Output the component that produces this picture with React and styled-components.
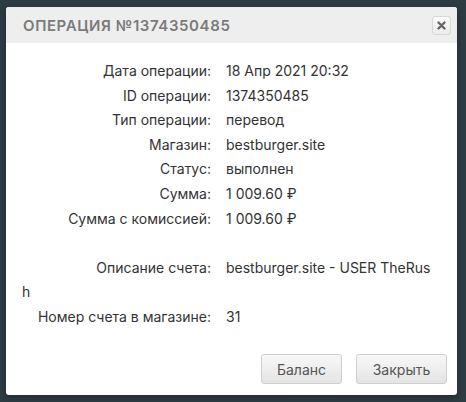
import React from 'react'
import styled, { createGlobalStyle } from 'styled-components'

const GlobalStyle = createGlobalStyle`
    html, body {
        margin: 0;
        padding: 0;
        background-color: #2d3b43;
    }
    body {
        font-family: Inter, "Noto Sans", sans-serif;
    }
`

const Overlay = styled.div`
    width: 466px;
    height: 402px;
    box-sizing: border-box;
    padding: 7px 9px 7px 6px;
`

const Dialog = styled.div`
    background-color: #fff;
    border-radius: 3px;
    overflow: hidden;
    box-shadow: 0 2px 6px rgba(0,0,0,.3);
    height: 388px;
    display: flex;
    flex-direction: column;
`

const Header = styled.div`
    display: flex;
    align-items: center;
    justify-content: space-between;
    height: 36px;
    padding: 0 6px 0 17px;
    background-color: #eeeeee;
`

const Title = styled.h2`
    margin: 0;
    font-size: 15px;
    font-weight: 600;
    letter-spacing: 0.6px;
    color: #7a7a7a;
    text-transform: uppercase;
`

const CloseButton = styled.button`
    width: 19px;
    height: 19px;
    padding: 0;
    border: 1px solid #d8d8d8;
    border-radius: 3px;
    background: linear-gradient(#fafafa, #ececec);
    display: flex;
    align-items: center;
    justify-content: center;
    cursor: pointer;
`

const Body = styled.div`
    flex: 1;
    padding: 16px 16px 0 16px;
    font-size: 14px;
    line-height: 24.6px;
    color: #333;
`

const InfoLine = styled.div`
    min-height: 24.6px;
`

const Label = styled.span`
    display: inline-block;
    width: 189px;
    text-align: right;
    margin-right: 15px;
`

const Footer = styled.div`
    display: flex;
    justify-content: flex-end;
    gap: 14px;
    padding: 0 10px 11px;
`

const Button = styled.button`
    height: 30px;
    width: ${p => p.$wide ? '91px' : '81px'};
    padding: 0;
    font-family: Inter, "Noto Sans", sans-serif;
    font-size: 14px;
    color: #555;
    border: 1px solid #cfcfcf;
    border-radius: 3px;
    background: linear-gradient(#f8f8f8, #e4e4e4);
    cursor: pointer;
`

const rows = [
    ['Дата операции:', '18 Апр 2021 20:32'],
    ['ID операции:', '1374350485'],
    ['Тип операции:', 'перевод'],
    ['Магазин:', 'bestburger.site'],
    ['Статус:', 'выполнен'],
    ['Сумма:', '1 009.60 ₽'],
    ['Сумма с комиссией:', '1 009.60 ₽'],
]

const App = () => {
    return (
        <Overlay>
            <GlobalStyle />
            <Dialog>
                <Header>
                    <Title>Операция №1374350485</Title>
                    <CloseButton aria-label="close">
                        <svg width="9" height="9" viewBox="0 0 9 9">
                            <path d="M1.5 1.5 L7.5 7.5 M7.5 1.5 L1.5 7.5" stroke="#666" strokeWidth="2.4" strokeLinecap="round" />
                        </svg>
                    </CloseButton>
                </Header>
                <Body>
                    {rows.map(([label, value]) => (
                        <InfoLine key={label}><Label>{label}</Label>{value}</InfoLine>
                    ))}
                    <InfoLine />
                    <InfoLine><Label>Описание счета:</Label>bestburger.site - USER TheRus<br />h</InfoLine>
                    <InfoLine><Label>Номер счета в магазине:</Label>31</InfoLine>
                </Body>
                <Footer>
                    <Button>Баланс</Button>
                    <Button $wide>Закрыть</Button>
                </Footer>
            </Dialog>
        </Overlay>
    )
}

export default App
